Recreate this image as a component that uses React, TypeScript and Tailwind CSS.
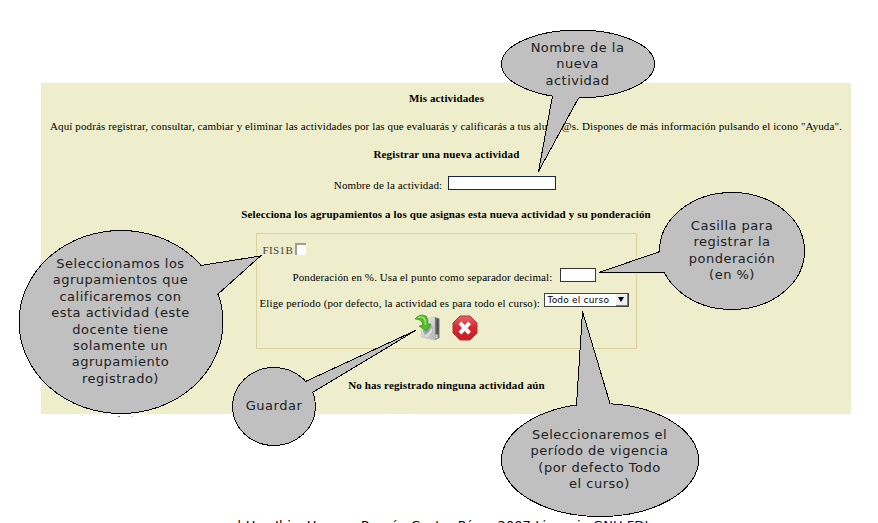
import React from "react";

type Callout = {
  ellipse: [number, number, number, number];
  tail: string;
  box: string;
  lines: string[];
};

const callouts: Callout[] = [
  {
    ellipse: [578, 64, 76.5, 34],
    tail: "552.5,96 538.5,171.5 578.5,98",
    box: "left-[501px] top-[40px] w-[153px]",
    lines: ["Nombre de la", "nueva", "actividad"],
  },
  {
    ellipse: [732, 251, 72.5, 58.5],
    tail: "660,251.5 599,272.5 665,272.5",
    box: "left-[659px] top-[218px] w-[146px]",
    lines: ["Casilla para", "registrar la", "ponderación", "(en %)"],
  },
  {
    ellipse: [121, 322, 102, 91.5],
    tail: "200.5,265.5 260.5,256 217.5,294.5",
    box: "left-[19px] top-[256px] w-[203px]",
    lines: [
      "Seleccionamos los",
      "agrupamientos que",
      "calificaremos con",
      "esta actividad (este",
      "docente tiene",
      "solamente un",
      "agrupamiento",
      "registrado)",
    ],
  },
  {
    ellipse: [274, 406.5, 41.5, 39],
    tail: "305.5,381.5 415.5,330.5 312.5,392.5",
    box: "left-[232px] top-[398px] w-[84px]",
    lines: ["Guardar"],
  },
  {
    ellipse: [600, 460, 98.5, 56.5],
    tail: "576.5,405 582.5,311.5 610,403.5",
    box: "left-[501px] top-[427px] w-[197px]",
    lines: ["Seleccionaremos el", "período de vigencia", "(por defecto Todo", "el curso)"],
  },
];

function SaveIcon() {
  return (
    <svg width="28" height="28" viewBox="0 0 28 28">
      <defs>
        <linearGradient id="disk" x1="0" y1="0" x2="1" y2="1">
          <stop offset="0" stopColor="#f4f4f2" />
          <stop offset="1" stopColor="#b4b4b2" />
        </linearGradient>
      </defs>
      <path d="M9 5 L21 3 L21 26 L7 23 Z" fill="url(#disk)" stroke="#c2c2bd" strokeWidth="0.6" />
      <path d="M21 3 L25.5 4.5 L25.5 24 L21 26 Z" fill="#7a7a7a" />
      <path d="M22.5 5 H24.5 V20 H22.5 Z" fill="#4c4c4c" />
      <path d="M21.3 20.5 H23.5 V24 L21.3 25 Z" fill="#d2d2d2" />
      <ellipse cx="14" cy="16" rx="5" ry="6" fill="#a1a5a9" />
      <path d="M10 21 Q15 20 17 14 L19 16 Q17 22 12 23 Z" fill="#dadada" />
      <path d="M1 5 Q6 -1 12 2 Q14 4 14 10 L17 10 L12.5 17 L5 12 L9 11 Q8 5 1 5 Z" fill="#55bd2c" stroke="#319018" strokeWidth="0.7" />
      <path d="M4 3.5 Q9 1.5 11 6 L11.5 11" fill="none" stroke="#a4e77a" strokeWidth="1.3" />
    </svg>
  );
}

function CancelIcon() {
  return (
    <svg width="26" height="26" viewBox="0 0 26 26">
      <defs>
        <linearGradient id="stop" x1="0" y1="0" x2="0" y2="1">
          <stop offset="0" stopColor="#e66666" />
          <stop offset="0.45" stopColor="#d92932" />
          <stop offset="1" stopColor="#c91b25" />
        </linearGradient>
      </defs>
      <path d="M8 1 H18 L25 8 V18 L18 25 H8 L1 18 V8 Z" fill="url(#stop)" stroke="#b0343a" strokeWidth="1" />
      <path d="M8 7.8 L17.5 18.2 M17.5 7.8 L8 18.2" stroke="#fff" strokeWidth="4" />
    </svg>
  );
}

export default function App() {
  return (
    <div className="relative h-[523px] w-[878px] overflow-hidden bg-white font-['Liberation_Serif',serif] text-[11px] leading-[14px] tracking-[0.1px] text-black">
      <main className="ml-[41px] flex h-[414px] w-[810px] flex-col items-center pt-[83px]">
        <div className="flex h-[331px] w-full shrink-0 flex-col items-center whitespace-nowrap bg-[#eeeecc] pt-[8px]">
          <h1 className="ml-px font-bold tracking-[0.14px]">Mis actividades</h1>
          <p className="mt-[14px] tracking-[0.107px]">
            Aquí podrás registrar, consultar, cambiar y eliminar las actividades por las que evaluarás y calificarás a tus alumn@s. Dispones de más información pulsando el icono "Ayuda".
          </p>
          <h2 className="mt-[14px] ml-px font-bold tracking-[0.14px]">Registrar una nueva actividad</h2>
          <div className="mt-[14px] mr-[2px] flex h-4 items-center gap-[6px]">
            <label htmlFor="nombre" className="pt-[3px]">Nombre de la actividad:</label>
            <input id="nombre" className="h-[14px] w-[108px] border border-[#17254c] bg-white" />
          </div>
          <h2 className="mt-[16px] font-bold tracking-[0.125px]">Selecciona los agrupamientos a los que asignas esta nueva actividad y su ponderación</h2>
          <section className="mt-[12px] h-[116px] w-[381px] border border-[#ddd29b] pt-[7px]">
            <div className="flex h-4 items-center gap-[2px] pl-[6px] text-[#444]">
              <span className="pt-[2px] tracking-[0.4px]">FIS1B</span>
              <span className="h-[12px] w-[11px] border-t-2 border-l-2 border-[#a09c98] bg-white" />
            </div>
            <div className="mt-[10px] flex h-4 items-center pl-[36px]">
              <span className="w-[267px] pt-[4px]">Ponderación en %. Usa el punto como separador decimal:</span>
              <span className="h-[14px] w-[36px] border border-[#333] bg-white" />
            </div>
            <div className="mt-[9px] flex h-4 items-center pl-[3px]">
              <span className="w-[284px] pt-[5px] tracking-[0.13px]">Elige período (por defecto, la actividad es para todo el curso):</span>
              <span className="flex h-[14px] w-[85px] items-center justify-between border border-[#444] bg-white pl-[3px] font-['DejaVu_Sans',sans-serif] text-[9px] leading-[12px] tracking-[0.2px]">
                Todo el curso
                <span className="flex h-full w-[12px] items-center justify-center border-r border-b border-[#777] bg-[#eee]">
                  <svg width="6" height="5" viewBox="0 0 6 5"><path d="M0 0H6L3 5Z" fill="#000" /></svg>
                </span>
              </span>
            </div>
            <div className="mt-[6px] flex items-center gap-[10px] pl-[157px]">
              <SaveIcon />
              <CancelIcon />
            </div>
          </section>
          <p className="mt-[29px] ml-px font-bold tracking-[0.15px]">No has registrado ninguna actividad aún</p>
        </div>
      </main>

      <footer className="mt-[105px] ml-[237px] whitespace-nowrap font-['DejaVu_Sans',sans-serif] text-[13px] leading-[14px] tracking-[0.08px]">
        | Hec Ibiz- Herrera Ramón Castro Pérez 2007 Licencia <span className="text-[#000080]">GNU FDL</span>
      </footer>

      <svg className="absolute inset-0" width="878" height="523" shapeRendering="crispEdges">
        {callouts.map(({ ellipse: [cx, cy, rx, ry], tail }) => (
          <g key={tail} fill="#c0c0c0" strokeWidth="1">
            <ellipse cx={cx} cy={cy} rx={rx} ry={ry} stroke="#000" />
            <polygon points={tail} stroke="#c0c0c0" />
            <polyline points={tail} stroke="#000" />
          </g>
        ))}
        <path d="M118 416.5H120" stroke="#777" />
        <path d="M131 416.5H133" stroke="#ccc" />
      </svg>
      {callouts.map((c) => (
        <div key={c.box} className={`absolute flex flex-col items-center whitespace-nowrap font-['DejaVu_Sans',sans-serif] text-[13px] leading-[16.4px] tracking-[0.5px] text-[#202020] ${c.box}`}>
          {c.lines.map((l) => (
            <span key={l}>{l}</span>
          ))}
        </div>
      ))}
    </div>
  );
}
